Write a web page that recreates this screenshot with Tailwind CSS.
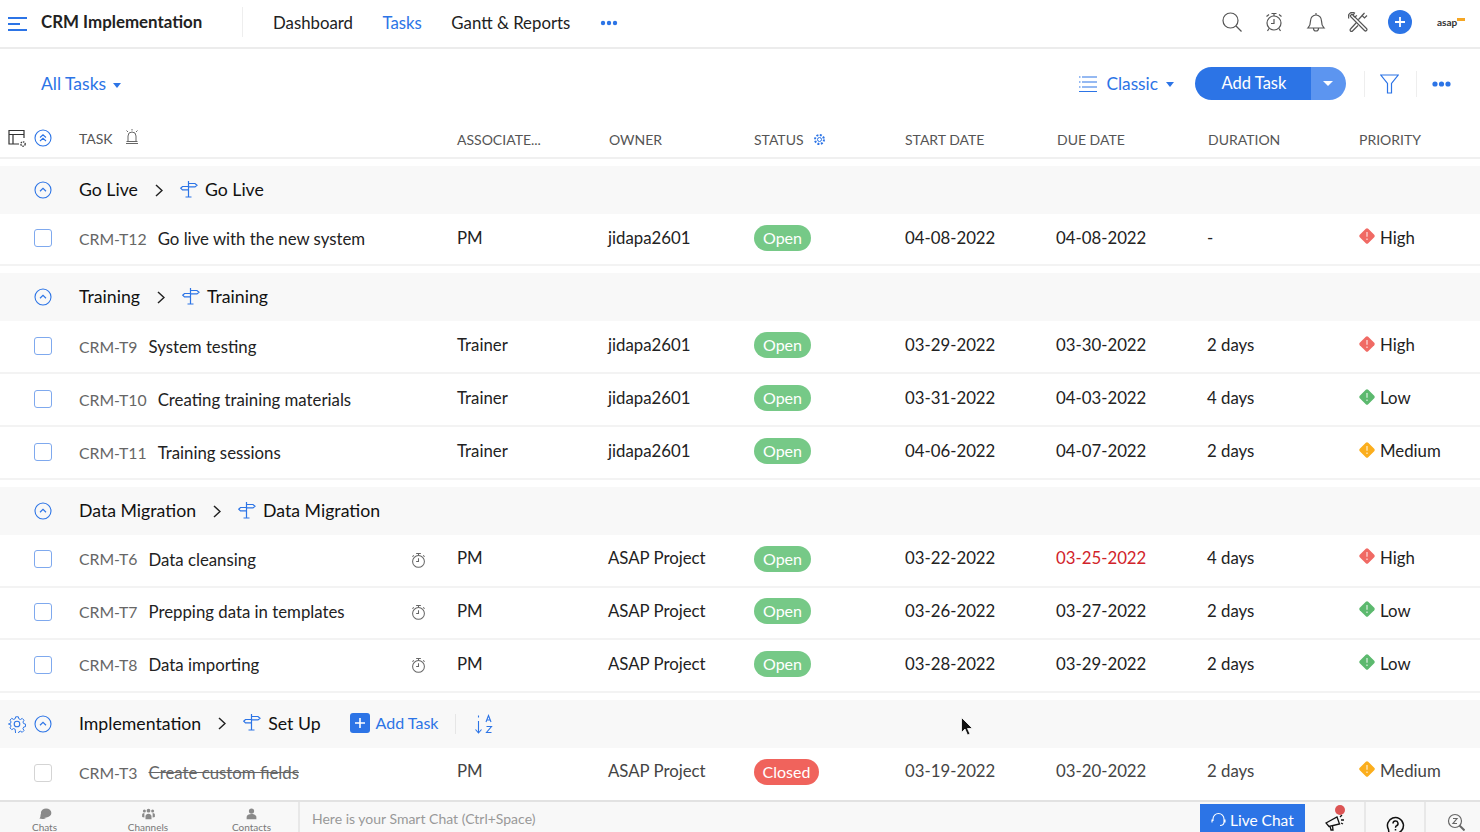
<!DOCTYPE html>
<html lang="en">
<head>
  <meta charset="UTF-8" />
  <title>CRM Implementation</title>
  <script src="https://cdn.jsdelivr.net/npm/@tailwindcss/browser@4"></script>
</head>
<body class="bg-white text-[#222] font-['Lato','Open_Sans',sans-serif] text-[16.8px] overflow-hidden">
<svg class="hidden">
  <symbol id="up" viewBox="0 0 18 18"><circle cx="9" cy="9" r="8" fill="none" stroke="#2c74e6" stroke-width="1.1"/><path d="M6 10.200 9 7.400l3 2.800" fill="none" stroke="#2c74e6" stroke-width="1.2"/></symbol>
  <symbol id="sign" viewBox="0 0 18 18"><path d="M8.500 1v16M5.500 17h6M8.500 3.500h6.500l2 1.700-2 1.700H8.500M8.500 6.500H2.500L.7 8.200l1.800 1.700h6" fill="none" stroke="#2c74e6" stroke-width="1.2"/></symbol>
  <symbol id="chev" viewBox="0 0 8 13"><path d="m1 1 6 5.500-6 5.500" fill="none" stroke="#222" stroke-width="1.5"/></symbol>
  <symbol id="watch" viewBox="0 0 16 18"><circle cx="8" cy="10" r="6.300" fill="none" stroke="#666" stroke-width="1.1"/><path d="M5.500 1.500h5M8 1.500v2M13 3.500l1.500 1.500M3 3.500 1.500 5M8 6.500V10H5.500" fill="none" stroke="#666" stroke-width="1.1"/></symbol>
  <symbol id="prio" viewBox="0 0 16 16"><rect x="2.700" y="2.700" width="10.600" height="10.600" rx="1.500" transform="rotate(45 8 8)" fill="currentColor"/><path d="M8 4.500v4.200M8 10.300v1.200" stroke="#fff" stroke-opacity=".65" stroke-width="1.3"/></symbol>
</svg>

<!-- Top bar -->
<header class="h-[49px] border-b-2 border-[#ececec] flex items-center">
  <svg class="ml-[8px] w-[19px] h-[14px]" viewBox="0 0 19 14"><path d="M0 1h19M0 7h12M0 13h19" stroke="#2c74e6" stroke-width="2"/></svg>
  <h1 class="ml-[14px] w-[201px] text-[16.9px] font-bold text-[#222] -mt-[4px]">CRM Implementation</h1>
  <div class="w-px h-[30px] bg-[#eee] -mt-[4px]"></div>
  <nav class="ml-[30px] flex items-center gap-[29.5px] -mt-[2px]">
    <a>Dashboard</a>
    <a class="text-[#2c74e6]">Tasks</a>
    <a>Gantt &amp; Reports</a>
    <svg class="w-[18px] h-[6px]" viewBox="0 0 18 6"><circle cx="3" cy="3" r="2.200" fill="#2c74e6"/><circle cx="9" cy="3" r="2.200" fill="#2c74e6"/><circle cx="15" cy="3" r="2.200" fill="#2c74e6"/></svg>
  </nav>
  <div class="ml-auto flex items-center gap-[22px] -mt-[4px]">
    <svg class="w-[20px] h-[20px]" viewBox="0 0 20 20" fill="none" stroke="#555" stroke-width="1.2"><circle cx="8.500" cy="8.500" r="7.500"/><path d="m14 14 5.500 5.500"/></svg>
    <svg class="w-[20px] h-[20px]" viewBox="0 0 20 20" fill="none" stroke="#555" stroke-width="1.2"><circle cx="10" cy="11" r="7"/><path d="M10 7v4.500H7M7.500 1.500h5M10 1.500V4M2.500 4.500 5 2.500M17.500 4.500 15 2.500M5 16.500 3.500 19M15 16.500l1.500 2.500"/></svg>
    <svg class="w-[20px] h-[20px]" viewBox="0 0 20 20" fill="none" stroke="#555" stroke-width="1.2"><path d="M2 16c2-2 2.500-3.500 2.500-7 0-3.500 2.500-6 5.500-6s5.500 2.500 5.500 6c0 3.500.5 5 2.500 7zM10 1v2M7.500 16.500a2.500 2.500 0 0 0 5 0"/></svg>
    <svg class="w-[20px] h-[20px]" viewBox="0 0 20 20" fill="none" stroke="#555" stroke-width="1.2"><path d="m2 4 2-2 14.500 14.500a1.400 1.400 0 0 1-2 2zM1 6.500a4 4 0 0 1 5.500-5.500L5 3.500 6.500 5 9 3.500M19 3.500 16.500 6 14 3.500 16.500 1l-6 6.500M8 11l-5.500 6a1.400 1.400 0 0 0 2 2L10 13.500"/></svg>
    <div class="-ml-[2px] w-[24px] h-[24px] rounded-full bg-[#2c74e6] flex items-center justify-center text-white"><svg class="w-[10px] h-[10px]" viewBox="0 0 10 10"><path d="M5 0v10M0 5h10" stroke="#fff" stroke-width="1.8"/></svg></div>
    <div class="w-[30px] mr-[13px] ml-[3px] flex items-start text-[10px] font-bold leading-none text-[#333]">asap<span class="w-[8px] h-[3px] bg-[#f5a623] mt-[1px]"></span></div>
  </div>
</header>

<!-- Toolbar -->
<section class="h-[71px] flex items-center pl-[41px] pb-[2px]">
  <div class="flex items-center gap-[7px] text-[#2c74e6] text-[17.500px] mt-[1px]">All Tasks <span class="w-0 h-0 border-x-[4.500px] border-x-transparent border-t-[5px] border-t-[#2c74e6] mt-[2px]"></span></div>
  <div class="ml-auto flex items-center">
    <svg class="w-[18px] h-[16px] mr-[9px] -ml-px" viewBox="0 0 18 16" stroke="#2c74e6" stroke-width="1.2"><path d="M3 1h15M3 6h15M3 11h15M0 15.500h18M0 1h1.500M0 6h1.500M0 11h1.500"/></svg>
    <span class="text-[#2c74e6] text-[17.300px] mt-[1px]">Classic</span>
    <span class="ml-[8px] w-0 h-0 border-x-[4.500px] border-x-transparent border-t-[5px] border-t-[#2c74e6] mt-[2px]"></span>
    <div class="ml-[21px] flex h-[33px] w-[151px] rounded-full overflow-hidden text-white text-[16.500px]">
      <div class="w-[116px] bg-[#2c74e6] flex items-center justify-center pl-[2px]">Add Task</div>
      <div class="flex-1 bg-[#5c95f0] flex items-center justify-center pr-[1px]"><span class="w-0 h-0 border-x-[5px] border-x-transparent border-t-[5px] border-t-white"></span></div>
    </div>
    <div class="w-px h-[26px] bg-[#eee] ml-[18px]"></div>
    <svg class="ml-[15px] w-[19px] h-[20px]" viewBox="0 0 19 20" fill="none" stroke="#2c74e6" stroke-width="1.2"><path d="M.8 1h17.400l-6.700 8.500v9.500h-4V9.500z"/></svg>
    <div class="w-px h-[26px] bg-[#eee] ml-[17px]"></div>
    <svg class="ml-[15px] mr-[29px] w-[19px] h-[6px]" viewBox="0 0 19 6"><circle cx="3" cy="3" r="2.600" fill="#2c74e6"/><circle cx="9.500" cy="3" r="2.600" fill="#2c74e6"/><circle cx="16" cy="3" r="2.600" fill="#2c74e6"/></svg>
  </div>
</section>

<!-- Table header -->
<div class="h-[39px] border-b-2 border-[#f0f0f0] grid grid-cols-[79px_378px_151px_146px_151px_151px_151px_151px_122px] items-center text-[14px] text-[#555] pb-[1px]">
  <div class="flex items-center pl-[8px] gap-[7px]">
    <svg class="w-[19px] h-[19px]" viewBox="0 0 19 19" fill="none" stroke="#333" stroke-width="1.2"><path d="M11 15H1V1.500h15V9M1 5.500h15M5 5.500V15"/><circle cx="15" cy="15" r="2.200" stroke-width="1.300" stroke-dasharray="1.500 .8"/></svg>
    <svg class="w-[18px] h-[18px]" viewBox="0 0 18 18" fill="none" stroke="#2c74e6" stroke-width="1.1"><circle cx="9" cy="9" r="8"/><path d="M6 8.500l3-2.700 3 2.700M6 12l3-2.700 3 2.700"/></svg>
  </div>
  <div class="flex items-center gap-[12px]">TASK
    <svg class="w-[14px] h-[16px] -mt-[3px]" viewBox="0 0 14 16" fill="none" stroke="#666"><path d="M3 12V7a4 4 0 0 1 8 0v5M1 14.500h12M1.500 12.500h11M7 0v1.500M1.500 1.500l1.500 1.500M12.500 1.500 11 3"/></svg>
  </div>
  <div class="mt-[2px]">ASSOCIATE...</div>
  <div class="mt-[2px] ml-px">OWNER</div>
  <div class="mt-[2px] flex items-center gap-[9px]">STATUS
    <svg class="w-[13px] h-[13px]" viewBox="0 0 13 13" fill="none" stroke="#2c74e6"><circle cx="6.500" cy="6.500" r="2"/><circle cx="6.500" cy="6.500" r="4.500" stroke-dasharray="2 1.500" stroke-width="2"/></svg>
  </div>
  <div class="mt-[2px]">START DATE</div>
  <div class="mt-[2px] ml-px">DUE DATE</div>
  <div class="mt-[2px] ml-px">DURATION</div>
  <div class="mt-[2px] ml-px">PRIORITY</div>
</div>

<main>
  <!-- Go Live -->
  <div class="mt-[7px] h-[48px] bg-[#f8f8f8] flex items-center pl-[34px] text-[17.700px] text-[#111]">
    <svg class="w-[18px] h-[18px]"><use href="#up"/></svg>
    <span class="ml-[27px]">Go Live</span>
    <svg class="ml-[17px] w-[8px] h-[13px]"><use href="#chev"/></svg>
    <svg class="ml-[17px] w-[18px] h-[18px] -mt-[3px]"><use href="#sign"/></svg>
    <span class="ml-[7px]">Go Live</span>
  </div>
  <div id="golive"></div>

  <!-- Training -->
  <div class="mt-[7px] h-[48px] bg-[#f8f8f8] flex items-center pl-[34px] text-[17.700px] text-[#111]">
    <svg class="w-[18px] h-[18px]"><use href="#up"/></svg>
    <span class="ml-[27px]">Training</span>
    <svg class="ml-[17px] w-[8px] h-[13px]"><use href="#chev"/></svg>
    <svg class="ml-[17px] w-[18px] h-[18px] -mt-[3px]"><use href="#sign"/></svg>
    <span class="ml-[7px]">Training</span>
  </div>
  <div id="training"></div>

  <!-- Data Migration -->
  <div class="mt-[7px] h-[48px] bg-[#f8f8f8] flex items-center pl-[34px] text-[17.700px] text-[#111]">
    <svg class="w-[18px] h-[18px]"><use href="#up"/></svg>
    <span class="ml-[27px]">Data Migration</span>
    <svg class="ml-[17px] w-[8px] h-[13px]"><use href="#chev"/></svg>
    <svg class="ml-[17px] w-[18px] h-[18px] -mt-[3px]"><use href="#sign"/></svg>
    <span class="ml-[7px]">Data Migration</span>
  </div>
  <div id="migration"></div>

  <!-- Implementation -->
  <div class="mt-[7px] h-[48px] bg-[#f8f8f8] flex items-center pl-[8px] text-[17.700px] text-[#111]">
    <svg class="w-[18px] h-[18px] mr-[8px]" viewBox="0 0 18 18" fill="none" stroke="#2c74e6" stroke-width="1.1"><circle cx="9" cy="9" r="2.800"/><path d="M7.500 1h3l.5 2.200 1.800.8 2-1.200 2 2-1.200 2 .8 1.800 2.100.500v2.800l-2.100.5-.8 1.800 1.200 2-2 2-2-1.200-1.800.8-.5 2.100h-3L7 14.900l-1.800-.8-2 1.200-2-2 1.200-2-.8-1.800L-.5 9l2.100-.5.800-1.800-1.200-2 2-2 2 1.200L7 3.100z" transform="translate(.9 .9) scale(.9)"/></svg>
    <svg class="w-[18px] h-[18px]"><use href="#up"/></svg>
    <span class="ml-[27px]">Implementation</span>
    <svg class="ml-[17px] w-[8px] h-[13px]"><use href="#chev"/></svg>
    <svg class="ml-[17px] w-[18px] h-[18px] -mt-[3px]"><use href="#sign"/></svg>
    <span class="ml-[7px]">Set Up</span>
    <div class="ml-[29px] w-[20px] h-[20px] rounded-[3px] bg-[#2c74e6] flex items-center justify-center -mt-[1px]"><svg class="w-[10px] h-[10px]" viewBox="0 0 10 10"><path d="M5 0v10M0 5h10" stroke="#fff" stroke-width="1.6"/></svg></div>
    <span class="ml-[6px] text-[#2c74e6] text-[16px] -mt-[1px]">Add Task</span>
    <div class="ml-[17px] w-px h-[20px] bg-[#e6e6e6]"></div>
    <svg class="ml-[18px] w-[20px] h-[20px]" viewBox="0 0 20 20" fill="none" stroke="#2c74e6" stroke-width="1.1"><path d="M4.500 7v12M1.500 15.500l3 3.500 3-3.500M4.500 1.500v2"/><path d="M12 8l2.500-6.500L17 8M13 6h3M12.500 12.500h5l-5 6h5"/></svg>
  </div>
  <div id="setup"></div>
</main>

<!-- Mouse cursor -->
<svg class="absolute left-[961px] top-[717px] w-[12px] h-[19px]" viewBox="0 0 12 19"><path d="M.5.500v15l3.500-3.500 2.500 6 2.500-1-2.500-5.500h5z" fill="#111" stroke="#fff" stroke-width=".8"/></svg>

<!-- Smart chat bar -->
<footer class="h-[32px] bg-[#f8f8f8] border-t-2 border-[#e2e2e2] flex text-[#999] overflow-hidden">
  <div class="w-[300px] shrink-0 flex border-r-2 border-[#e8e8e8] text-[10px] leading-none text-[#777]">
    <div class="w-[89px] flex flex-col items-center pt-[6px]">
      <svg class="w-[18px] h-[17px]" viewBox="0 0 17 16" fill="#8a8a8a"><ellipse cx="10" cy="6.500" rx="7" ry="6"/><path d="M1 14c1-1 1.500-2 1.500-4 0-2 1-3.500 3-4 0 4 1.500 6.500 5 7-3 2-6.500 2-9.500 1z"/></svg>
      <span class="mt-[2px]">Chats</span>
    </div>
    <div class="w-[118px] flex flex-col items-center pt-[6px]">
      <svg class="w-[17px] h-[17px]" viewBox="0 0 17 16" fill="#8a8a8a"><circle cx="8.500" cy="3.500" r="2.500"/><circle cx="3" cy="4" r="2"/><circle cx="14" cy="4" r="2"/><path d="M4.500 15v-4c0-2 2-3.500 4-3.500s4 1.500 4 3.500v4zM0 12V9c0-1.500 1-2.500 3-2.500v6zM17 12V9c0-1.500-1-2.500-3-2.500v6z"/></svg>
      <span class="mt-[2px]">Channels</span>
    </div>
    <div class="w-[89px] flex flex-col items-center pt-[6px]">
      <svg class="w-[15px] h-[17px]" viewBox="0 0 15 16" fill="#8a8a8a"><circle cx="7.500" cy="4" r="3.500"/><path d="M1 15v-3c0-2.500 3-4 6.500-4s6.500 1.500 6.500 4v3z"/></svg>
      <span class="mt-[2px]">Contacts</span>
    </div>
  </div>
  <div class="ml-[12px] text-[14px] pt-[6px] flex-1">Here is your Smart Chat (Ctrl+Space)</div>
  <div class="w-[105px] shrink-0 mt-[2px] bg-[#2c74e6] text-white text-[15.500px] flex items-center pl-[11px] gap-[4px] pt-[5px]">
    <svg class="w-[15px] h-[16px]" viewBox="0 0 15 16" fill="none" stroke="#fff" stroke-width="1.1"><path d="M2 9V7a5.500 5.500 0 0 1 11 0v3c0 2-1.500 3.500-4 3.500M1 7.500v3M14 7.500v3"/></svg>
    Live Chat
  </div>
  <div class="w-[61px] shrink-0 flex justify-center items-end relative border-r-2 border-[#e8e8e8]">
    <svg class="w-[20px] h-[17px] mb-px" viewBox="0 0 20 17" fill="none" stroke="#111" stroke-width="1.3"><path d="M1 9 12 3l2.500 7L4 12.500zM5 12l1 4h2l-.5-4.500M15 3l2-2M16 6h3M16 9l2 1"/></svg>
    <span class="absolute top-[3px] left-[30px] w-[10px] h-[10px] rounded-full bg-[#dc5454]"></span>
  </div>
  <div class="w-[60px] shrink-0 flex justify-center items-end border-r-2 border-[#e8e8e8]">
    <svg class="w-[19px] h-[19px] -mb-[3px]" viewBox="0 0 19 19" fill="none" stroke="#111" stroke-width="1.5"><path d="M3 17.500h6.500a8 8 0 1 0-7-4z"/><path d="M7 7.500a2.500 2.500 0 1 1 3.500 2.300c-1 .4-1 1-1 2M9.500 13v1.500"/></svg>
  </div>
  <div class="w-[54px] shrink-0 flex justify-center items-end pl-[6px]">
    <svg class="w-[18px] h-[18px] mb-[1px]" viewBox="0 0 18 18" fill="none" stroke="#666" stroke-width="1.2"><circle cx="8" cy="8" r="6.500"/><path d="M6 5.500h4L6 10.500h4"/><path d="m12.500 12.500 5 5" stroke-width="2"/></svg>
  </div>
</footer>

<script>
  const prioColor = { High: 'text-[#f06a64]', Low: 'text-[#5cb96e]', Medium: 'text-[#fbae1d]' };

  // small vertical nudges differ per block, the source rows don't sit on whole pixels
  const blocks = {
    golive: { row: 'h-[52px] border-b-2 border-[#f3f3f3]', task: '', text: '-mt-[3px]', badge: '-mt-[3px]' },
    training: { row: 'h-[53px] border-b-2 border-[#f3f3f3]', task: '', text: '-mt-[3px]', badge: '-mt-[3px]' },
    migration: { row: 'h-[52.670px] border-b-2 border-[#f3f3f3]', task: '-mt-[2px]', text: '-mt-[5px]', badge: '-mt-[3px]' },
    setup: { row: 'h-[52px]', task: '-mt-[3px]', text: '-mt-[7px] text-[#444]', badge: '-mt-[4px]' }
  };

  const tasks = [
    ['golive', 'CRM-T12', 'Go live with the new system', 'PM', 'jidapa2601', 'Open', '04-08-2022', '04-08-2022', '-', 'High'],
    ['training', 'CRM-T9', 'System testing', 'Trainer', 'jidapa2601', 'Open', '03-29-2022', '03-30-2022', '2 days', 'High'],
    ['training', 'CRM-T10', 'Creating training materials', 'Trainer', 'jidapa2601', 'Open', '03-31-2022', '04-03-2022', '4 days', 'Low'],
    ['training', 'CRM-T11', 'Training sessions', 'Trainer', 'jidapa2601', 'Open', '04-06-2022', '04-07-2022', '2 days', 'Medium'],
    ['migration', 'CRM-T6', 'Data cleansing', 'PM', 'ASAP Project', 'Open', '03-22-2022', '03-25-2022', '4 days', 'High', true, true],
    ['migration', 'CRM-T7', 'Prepping data in templates', 'PM', 'ASAP Project', 'Open', '03-26-2022', '03-27-2022', '2 days', 'Low', true],
    ['migration', 'CRM-T8', 'Data importing', 'PM', 'ASAP Project', 'Open', '03-28-2022', '03-29-2022', '2 days', 'Low', true],
    ['setup', 'CRM-T3', 'Create custom fields', 'PM', 'ASAP Project', 'Closed', '03-19-2022', '03-20-2022', '2 days', 'Medium']
  ];

  tasks.forEach(([block, id, name, assoc, owner, status, start, due, dur, prio, timer, overdue]) => {
    const b = blocks[block];
    const closed = status === 'Closed';
    const row = document.createElement('div');
    row.className = `${b.row} grid grid-cols-[79px_378px_151px_146px_151px_151px_151px_151px_122px] items-center`;
    row.innerHTML = `
      <div class="pl-[34px] -mt-[2px]"><div class="w-[18px] h-[18px] border-[1.500px] rounded-[3px] ${closed ? 'border-[#d4d4d4]' : 'border-[#7fa9ee]'}"></div></div>
      <div class="flex items-center ${b.task}">
        <span class="text-[#666] text-[15.800px]">${id}</span>
        <span class="ml-[11px] ${closed ? 'line-through text-[#666]' : ''}">${name}</span>
        ${timer ? '<svg class="ml-auto mr-[31px] w-[15px] h-[17px] mt-[2px]"><use href="#watch"/></svg>' : ''}
      </div>
      <div class="${b.text}">${assoc}</div>
      <div class="${b.text}">${owner}</div>
      <div class="${b.badge}"><span class="inline-block h-[26px] leading-[26px] text-center rounded-full text-white text-[16px] ${closed ? 'w-[65px] bg-[#f0635c]' : 'w-[57px] bg-[#76c987]'}">${status}</span></div>
      <div class="${b.text}">${start}</div>
      <div class="${b.text} ${overdue ? 'text-[#d1232a]' : ''}">${due}</div>
      <div class="${b.text}">${dur}</div>
      <div class="${b.text} flex items-center gap-[4px]"><svg class="w-[18px] h-[18px] -mt-[3px] ${prioColor[prio]}"><use href="#prio"/></svg>${prio}</div>
    `;
    document.getElementById(block).appendChild(row);
  });
</script>
</body>
</html>
